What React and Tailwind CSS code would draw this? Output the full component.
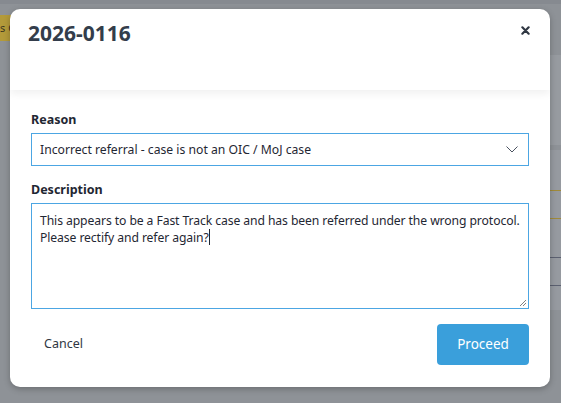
import React from "react";

const font = { fontFamily: '"Noto Sans", "Open Sans", sans-serif' };

export default function App() {
  return (
    <div className="relative w-[561px] h-[403px] overflow-hidden bg-[#8e9297]" style={font}>
      {/* backdrop hints */}
      <div className="absolute left-0 top-0 w-full h-[4px] bg-[#868a90]" />
      <div className="absolute left-0 top-[15px] w-[12px] h-[26px] bg-[#b39a3a] text-[11px] leading-[26px] text-[#3a3520] overflow-hidden whitespace-nowrap">s C</div>
      <div className="absolute right-0 top-[55px] w-[14px] h-[90px] bg-[#979ba0]" />
      <div className="absolute right-0 top-[150px] w-[14px] h-[160px] bg-[#969aa0]" />
      <div className="absolute right-0 top-[190px] w-[14px] h-[1px] bg-[#a08a3a]" />
      <div className="absolute right-0 top-[218px] w-[14px] h-[1px] bg-[#a08a3a]" />
      <div className="absolute right-0 top-[257px] w-[14px] h-[1px] bg-[#5b6070]" />
      <div className="absolute right-0 top-[285px] w-[14px] h-[1px] bg-[#5b6070]" />

      <div className="absolute left-[10px] top-[9px] w-[540px] h-[378px] bg-white rounded-[10px] shadow-[0_2px_6px_rgba(0,0,0,0.25)] flex flex-col overflow-hidden">
        <div className="h-[81px] shrink-0 flex items-start justify-between pl-[18px] pr-[20px] pt-[10px] shadow-[0_4px_8px_rgba(0,0,0,0.06)] relative z-10">
          <h1 className="text-[21px] font-bold text-[#333d4b] leading-[28px]">2026-0116</h1>
          <svg width="9" height="9" viewBox="0 0 10 10" className="mt-[7px]">
            <path d="M1.5 1.5 L8.5 8.5 M8.5 1.5 L1.5 8.5" stroke="#2f3742" strokeWidth="2.4" strokeLinecap="round" />
          </svg>
        </div>
        <div className="flex flex-col px-[21px] pt-[22px]">
          <label className="text-[12.5px] font-bold text-[#1f2733] leading-[16px]">Reason</label>
          <div className="mt-[5px] h-[33px] border border-[#4ca6e3] flex items-center justify-between pl-[8px] pr-[10px]">
            <span className="text-[12.2px] text-[#1f2733] leading-[16px]">Incorrect referral - case is not an OIC / MoJ case</span>
            <svg width="12" height="7" viewBox="0 0 12 7">
              <path d="M0.5 0.5 L6 6 L11.5 0.5" stroke="#4a5260" strokeWidth="1" fill="none" />
            </svg>
          </div>
          <label className="mt-[16px] text-[12.5px] font-bold text-[#1f2733] leading-[16px]">Description</label>
          <div className="relative mt-[5px] h-[106px] border border-[#4ca6e3] px-[8px] pt-[8px]">
            <p className="text-[12.2px] leading-[17px] text-[#1f2733] tracking-[-0.1px]">
              This appears to be a Fast Track case and has been referred under the wrong protocol. Please rectify and refer again?<span className="inline-block w-[1px] h-[16px] bg-[#1f2733] align-[-3px]" />
            </p>
            <svg width="8" height="8" viewBox="0 0 8 8" className="absolute right-[1px] bottom-[1px]">
              <path d="M7 1 L1 7 M7 4 L4 7" stroke="#808080" strokeWidth="1" />
            </svg>
          </div>
          <div className="mt-[15px] flex items-center justify-between">
            <span className="ml-[13px] text-[12.5px] text-[#2f3742]">Cancel</span>
            <button className="w-[92px] h-[41px] rounded-[4px] bg-[#3a9fdb] text-white text-[13.5px]">Proceed</button>
          </div>
        </div>
      </div>
    </div>
  );
}
